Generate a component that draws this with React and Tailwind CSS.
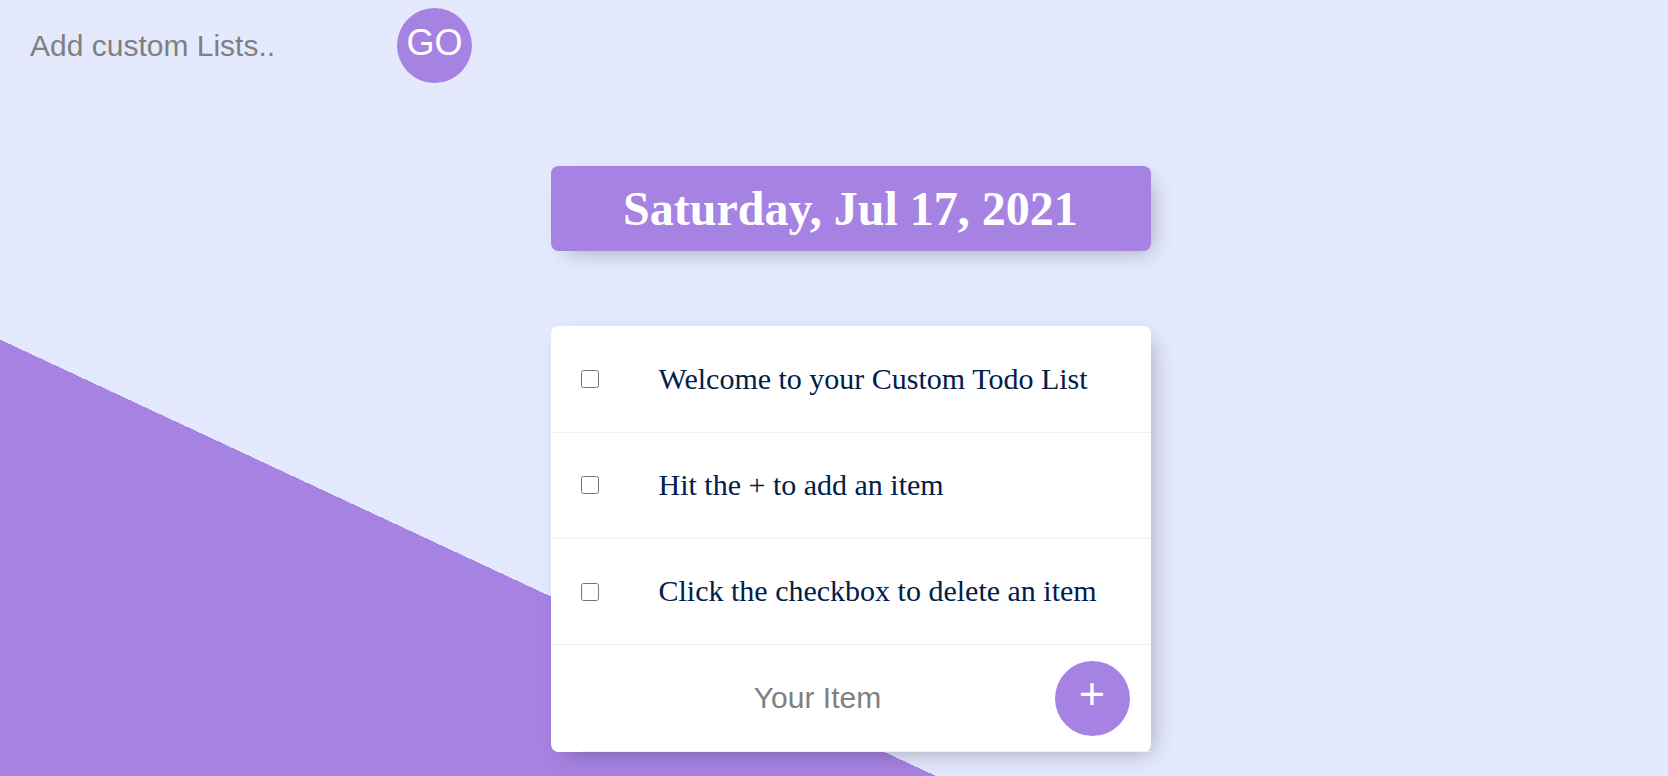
import React from 'react';

const items = [
  'Welcome to your Custom Todo List',
  'Hit the + to add an item',
  'Click the checkbox to delete an item',
];

const TodoItem = ({ text }) => (
  <div className="flex items-center h-[106.4px] border-b border-[#f1f1f1]">
    <input type="checkbox" className="m-[30px] w-[18px] h-[18px] shrink-0" />
    <p className="p-[30px] m-0 text-[30px] text-[#00204a] font-['Liberation_Serif',serif] leading-[1.15]">
      {text}
    </p>
  </div>
);

export default function App() {
  return (
    <div className="w-full h-[776px] overflow-hidden bg-[#e4e9fd] bg-[linear-gradient(25deg,#a683e3_50%,#e4e9fd_50%)] bg-[length:1668px_1457px] bg-no-repeat">
      <div className="w-[1701px]">
        <form className="flex items-center h-[91px]" onSubmit={(e) => e.preventDefault()}>
          <input
            type="text"
            placeholder="Add custom Lists.."
            className="w-[397px] h-[90px] pl-[30px] bg-transparent border-0 outline-none text-[30px] font-['Liberation_Sans',Arial,sans-serif] placeholder:text-[#808080]"
          />
          <button
            type="submit"
            className="w-[75px] h-[75px] rounded-full bg-[#a683e3] text-white text-[36px] pb-[6px] font-['Liberation_Sans',Arial,sans-serif] flex items-center justify-center"
          >
            GO
          </button>
        </form>

        <div className="w-[600px] mx-auto mt-[75px] bg-[#a683e3] rounded-[7.5px] shadow-[7.5px_7.5px_22.5px_-7.5px_rgba(0,0,0,0.3)] text-center">
          <h1 className="p-[15px] m-0 text-[48px] font-bold text-white font-['Liberation_Serif',serif] leading-[1.15]">
            Saturday, Jul 17, 2021
          </h1>
        </div>

        <div className="w-[600px] mx-auto mt-[75px] bg-white rounded-[7.5px] shadow-[7.5px_7.5px_22.5px_-7.5px_rgba(0,0,0,0.3)]">
          {items.map((t) => (
            <TodoItem key={t} text={t} />
          ))}
          <form
            className="flex items-center h-[106.4px] ml-[30px] border-b border-[#f1f1f1]"
            onSubmit={(e) => e.preventDefault()}
          >
            <input
              type="text"
              placeholder="Your Item"
              className="w-[474px] h-[90px] text-center bg-transparent border-0 outline-none text-[30px] font-['Liberation_Sans',Arial,sans-serif] placeholder:text-[#808080]"
            />
            <button
              type="submit"
              className="w-[75px] h-[75px] rounded-full bg-[#a683e3] text-white text-[45px] pb-[9px] leading-none font-['Liberation_Sans',Arial,sans-serif] flex items-center justify-center"
            >
              +
            </button>
          </form>
        </div>
      </div>
    </div>
  );
}
